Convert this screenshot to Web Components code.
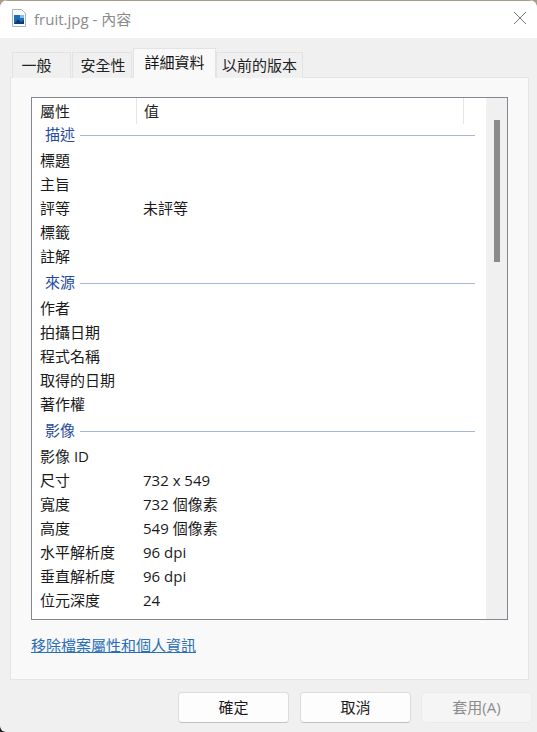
<!DOCTYPE html>
<html lang="zh-Hant">
<head>
<meta charset="utf-8">
<title>fruit.jpg - 內容</title>
<style>
  html, body { margin: 0; padding: 0; background: #f0f0f0; }
  body { width: 537px; height: 732px; overflow: hidden; background: linear-gradient(#a79f8c 50%, #1a1a1a 50%); font: 15px "Open Sans", "Noto Sans CJK TC", sans-serif; color: #1a1a1a; }
</style>
</head>
<body>
<prop-window>
  <title-bar slot="title">fruit.jpg - 內容</title-bar>
  <prop-tab slot="tabs" w="59" pad="10">一般</prop-tab>
  <prop-tab slot="tabs" w="60" padl="2">安全性</prop-tab>
  <prop-tab slot="tabs" w="83" active>詳細資料</prop-tab>
  <prop-tab slot="tabs" w="87">以前的版本</prop-tab>
  <detail-list>
    <group-row>描述</group-row>
    <prop-row name="標題"></prop-row>
    <prop-row name="主旨"></prop-row>
    <prop-row name="評等">未評等</prop-row>
    <prop-row name="標籤"></prop-row>
    <prop-row name="註解"></prop-row>
    <group-row>來源</group-row>
    <prop-row name="作者"></prop-row>
    <prop-row name="拍攝日期"></prop-row>
    <prop-row name="程式名稱"></prop-row>
    <prop-row name="取得的日期"></prop-row>
    <prop-row name="著作權"></prop-row>
    <group-row>影像</group-row>
    <prop-row name="影像 ID"></prop-row>
    <prop-row name="尺寸">732 x 549</prop-row>
    <prop-row name="寬度">732 個像素</prop-row>
    <prop-row name="高度">549 個像素</prop-row>
    <prop-row name="水平解析度">96 dpi</prop-row>
    <prop-row name="垂直解析度">96 dpi</prop-row>
    <prop-row name="位元深度">24</prop-row>
  </detail-list>
  <a slot="link" href="#" style="color:#2a6fb5">移除檔案屬性和個人資訊</a>
  <dlg-button slot="buttons">確定</dlg-button>
  <dlg-button slot="buttons">取消</dlg-button>
  <dlg-button slot="buttons" disabled>套用(A)</dlg-button>
</prop-window>

<script>
class PropWindow extends HTMLElement {
  constructor() {
    super();
    this.attachShadow({ mode: 'open' });
    this.shadowRoot.innerHTML = `
      <style>
        :host { display: flex; flex-direction: column; width: 537px; height: 732px; background: #f0f0f0; overflow: hidden; border-radius: 8px 8px 0 6px; }
        .tabs { display: flex; align-items: flex-end; height: 40px; padding-left: 12px; gap: 1px; margin-bottom: -1px; position: relative; z-index: 1; }
        .panel { margin: 0 8px 0 10px; height: 603px; box-sizing: border-box; background: #f9f9f9; border: 1px solid #e5e5e5; padding: 19px 20px 0 20px; }
        .link { margin-top: 15px; line-height: 20px; }
        .buttons { display: flex; justify-content: flex-end; gap: 11px; padding: 12px 5px 0 0; }
      </style>
      <slot name="title"></slot>
      <div class="tabs"><slot name="tabs"></slot></div>
      <div class="panel">
        <slot></slot>
        <div class="link"><slot name="link"></slot></div>
      </div>
      <div class="buttons"><slot name="buttons"></slot></div>
    `;
  }
}

class TitleBar extends HTMLElement {
  constructor() {
    super();
    this.attachShadow({ mode: 'open' });
    this.shadowRoot.innerHTML = `
      <style>
        :host { display: flex; align-items: center; height: 38px; box-sizing: border-box; background: #fff; border-top: 1px solid #a79f8c; padding: 0 10px 3px 12px; color: #8b8b8b; }
        svg { flex: none; margin-right: 8px; }
        .text { flex: 1; }
      </style>
      <svg width="14" height="18" viewBox="0 0 14 18">
        <path d="M.5.5h9l4 4v13H.5z" fill="#fbfbfb" stroke="#a9b4c0"/>
        <path d="M2 6h10v9H2z" fill="#1f6fb8"/>
        <path d="M2 15l4-5 3 3 3-2v4z" fill="#0c3a73"/>
        <path d="M8 6h4v3H8z" fill="#7fc0ec"/>
      </svg>
      <span class="text"><slot></slot></span>
      <svg width="14" height="14" viewBox="0 0 14 14" style="margin:0">
        <path d="M1 1l12 12M13 1L1 13" stroke="#777" stroke-width="1" fill="none"/>
      </svg>
    `;
  }
}

class PropTab extends HTMLElement {
  constructor() {
    super();
    this.attachShadow({ mode: 'open' });
    this.shadowRoot.innerHTML = `
      <style>
        :host { display: flex; align-items: center; justify-content: center; box-sizing: border-box; height: 26px; padding-bottom: 2px; background: #f0f0f0; border: 1px solid #e3e3e3; border-bottom: none; color: #222; }
        :host([active]) { height: 30px; background: #f9f9f9; margin: 0 -1px 0 0; padding-bottom: 4px; color: #111; }
      </style>
      <slot></slot>
    `;
    this.style.width = this.getAttribute('w') + 'px';
    if (this.hasAttribute('pad')) this.style.paddingRight = this.getAttribute('pad') + 'px';
    if (this.hasAttribute('padl')) this.style.paddingLeft = this.getAttribute('padl') + 'px';
  }
}

class DetailList extends HTMLElement {
  constructor() {
    super();
    this.attachShadow({ mode: 'open' });
    this.shadowRoot.innerHTML = `
      <style>
        :host { display: flex; width: 477px; height: 523px; box-sizing: border-box; background: #fff; border: 1px solid #828790; overflow: hidden; }
        .main { flex: 1; min-width: 0; }
        .head { display: flex; height: 26px; line-height: 26px; margin-bottom: -4px; color: #222; }
        .head span { box-sizing: border-box; padding-left: 8px; }
        .col1 { width: 105px; border-right: 1px solid #e5e5e5; }
        .col2 { width: 327px; border-right: 1px solid #e5e5e5; padding-left: 7px !important; }
        .bar { flex: none; width: 21px; background: #f0f0f0; display: flex; justify-content: center; padding-top: 22px; box-sizing: border-box; }
        .thumb { width: 6px; height: 142px; background: #8b8b8b; }
      </style>
      <div class="main">
        <div class="head"><span class="col1">屬性</span><span class="col2">值</span></div>
        <slot></slot>
      </div>
      <div class="bar"><div class="thumb"></div></div>
    `;
  }
}

class GroupRow extends HTMLElement {
  constructor() {
    super();
    this.attachShadow({ mode: 'open' });
    this.shadowRoot.innerHTML = `
      <style>
        :host { display: flex; align-items: center; height: 28px; padding: 2px 11px 0 13px; box-sizing: border-box; color: #24489c; }
        .t { margin-bottom: 3px; }
        .line { flex: 1; height: 1px; background: #a9b8d8; margin-left: 5px; }
      </style>
      <span class="t"><slot></slot></span><div class="line"></div>
    `;
  }
}

class PropRow extends HTMLElement {
  constructor() {
    super();
    this.attachShadow({ mode: 'open' });
    this.shadowRoot.innerHTML = `
      <style>
        :host { display: flex; height: 24px; line-height: 24px; color: #1a1a1a; }
        .name { width: 104px; padding-left: 8px; box-sizing: border-box; }
        .value { padding-left: 7px; }
      </style>
      <span class="name"></span><span class="value"><slot></slot></span>
    `;
    this.shadowRoot.querySelector('.name').textContent = this.getAttribute('name');
  }
}

class DlgButton extends HTMLElement {
  constructor() {
    super();
    this.attachShadow({ mode: 'open' });
    this.shadowRoot.innerHTML = `
      <style>
        :host { display: flex; align-items: center; justify-content: center; box-sizing: border-box; width: 111px; height: 31px; padding-bottom: 2px; background: #fdfdfd; border: 1px solid #dcdcdc; border-bottom-color: #c2c2c2; border-radius: 4px; color: #1a1a1a; }
        :host([disabled]) { margin-left: -1px; background: #f5f5f5; border-color: #ebebeb; color: #8c8c8c; }
      </style>
      <slot></slot>
    `;
  }
}

customElements.define('prop-window', PropWindow);
customElements.define('title-bar', TitleBar);
customElements.define('prop-tab', PropTab);
customElements.define('detail-list', DetailList);
customElements.define('group-row', GroupRow);
customElements.define('prop-row', PropRow);
customElements.define('dlg-button', DlgButton);
</script>
</body>
</html>
